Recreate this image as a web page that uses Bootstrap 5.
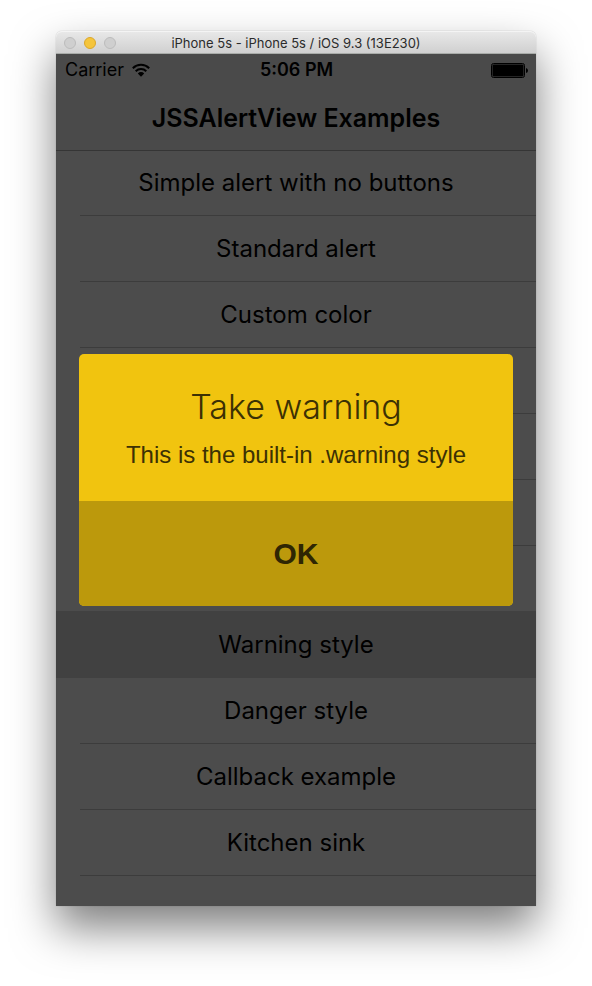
<!DOCTYPE html>
<html lang="en">
<head>
<meta charset="utf-8">
<meta name="viewport" content="width=device-width, initial-scale=1">
<title>JSSAlertView Examples</title>
<link href="https://cdn.jsdelivr.net/npm/bootstrap@5.3.0/dist/css/bootstrap.min.css" rel="stylesheet">
<style>
  body { background: #fff; color: #000; font-family: Inter, sans-serif; }
  .desktop { padding: 31px 56px 80px; }
  .sim-window { border-radius: 6px 6px 0 0; box-shadow: 0 22px 44px rgba(0,0,0,.5), 0 0 1px rgba(0,0,0,.4); }
  .titlebar { height: 23px; padding: 0 8px; border-radius: 6px 6px 0 0; border-bottom: 1px solid #a9aca9;
    background: linear-gradient(#e9e9e9, #d0d0d0); box-shadow: inset 0 1px #f4f4f4; }
  .titlebar h1 { font-size: 13px; line-height: 22px; padding-top: 2px; color: #2b2b2b; }
  .light { width: 12px; height: 12px; padding: 0; margin-top: 2px; border: 1px solid #bcbcbc; border-radius: 50%; background: #cfcfcf; }
  .light-min { background: #f5c53c; border-color: #dba72b; }
  .side { flex: 1 1 0; }
  .app-head { background: #f7f7f7; box-shadow: 0 1px #b2b2b2; z-index: 1; }
  .status { height: 32px; padding: 0 8px 0 9px; font-size: 18px; line-height: 32px; }
  .clock { font-weight: 600; }
  .app-title { height: 64px; line-height: 64px; font-size: 25px; font-weight: 600; }
  .examples { padding-bottom: 30px; background: #fff; }
  .example { height: 66px; }
  .example::before { content: ""; position: absolute; left: 24px; right: 0; bottom: 0; height: 1px; background: #c8c8c8; }
  .example button { font-size: 24px; line-height: 66px; color: #000; }
  .picked { background: #d9d9d9; box-shadow: 0 -1px #d9d9d9; }
  .picked::before { display: none; }
  .scrim { background: rgba(0,0,0,.7); padding: 0 23px; z-index: 2; }
  .alert-panel { border-radius: 5px; background: #f1c40f; color: #3c3104; }
  .alert-text { padding: 32px 16px 31px; }
  .alert-text h3 { font-size: 34px; line-height: 42px; font-weight: 300; }
  .alert-text p { font: 24px/30px "Liberation Sans", sans-serif; padding-top: 12px; }
  .alert-ok { height: 105px; background: #bc990c; color: #2f2603; font: 700 30px/106px "Liberation Sans", sans-serif; }
</style>
<script src="https://cdn.jsdelivr.net/npm/bootstrap@5.3.0/dist/js/bootstrap.bundle.min.js"></script>
</head>
<body>
<div class="desktop">
  <div class="sim-window">
    <header class="titlebar d-flex align-items-center">
      <div class="side d-flex gap-2">
        <button type="button" class="light" aria-label="Close"></button>
        <button type="button" class="light light-min" aria-label="Minimize"></button>
        <button type="button" class="light" aria-label="Zoom"></button>
      </div>
      <h1 class="m-0 fw-normal text-nowrap">iPhone 5s - iPhone 5s / iOS 9.3 (13E230)</h1>
      <div class="side"></div>
    </header>
    <main class="position-relative">
      <div class="app-head position-relative">
        <div class="status d-flex align-items-center">
          <div class="side d-flex align-items-center gap-2">
            <span>Carrier</span>
            <svg width="18" height="14" viewBox="0 0 18 14" aria-hidden="true">
              <g fill="none" stroke="#000" stroke-width="2">
                <path d="M.8 5.200a11.700 11.700 0 0 1 16.400 0"/>
                <path d="M3.700 8.300a7.500 7.500 0 0 1 10.600 0"/>
              </g>
              <path d="M5.800 10.400a4.600 4.600 0 0 1 6.400 0L9 13.700z"/>
            </svg>
          </div>
          <span class="clock">5:06 PM</span>
          <div class="side d-flex justify-content-end">
            <svg width="37" height="15" viewBox="0 0 37 15" aria-hidden="true">
              <rect x=".5" y=".5" width="33" height="14" rx="2" fill="none" stroke="#000"/>
              <rect x="1.500" y="1.500" width="31" height="12" rx="1"/>
              <path d="M35 5q2 .5 2 2.500T35 10z"/>
            </svg>
          </div>
        </div>
        <h2 class="app-title m-0 text-center">JSSAlertView Examples</h2>
      </div>
      <ul class="examples list-unstyled m-0">
        <li class="example position-relative"><button type="button" class="btn w-100 p-0 border-0">Simple alert with no buttons</button></li>
        <li class="example position-relative"><button type="button" class="btn w-100 p-0 border-0">Standard alert</button></li>
        <li class="example position-relative"><button type="button" class="btn w-100 p-0 border-0">Custom color</button></li>
        <li class="example position-relative"></li>
        <li class="example position-relative"></li>
        <li class="example position-relative"></li>
        <li class="example position-relative"></li>
        <li class="example picked position-relative"><button type="button" class="btn w-100 p-0 border-0">Warning style</button></li>
        <li class="example position-relative"><button type="button" class="btn w-100 p-0 border-0">Danger style</button></li>
        <li class="example position-relative"><button type="button" class="btn w-100 p-0 border-0">Callback example</button></li>
        <li class="example position-relative"><button type="button" class="btn w-100 p-0 border-0">Kitchen sink</button></li>
      </ul>
      <div class="scrim position-absolute top-0 start-0 w-100 h-100 d-flex align-items-center">
        <section class="alert-panel w-100 overflow-hidden text-center" role="alertdialog" aria-labelledby="alert-title" aria-describedby="alert-body">
          <div class="alert-text">
            <h3 id="alert-title" class="m-0">Take warning</h3>
            <p id="alert-body" class="m-0">This is the built-in .warning style</p>
          </div>
          <button type="button" class="alert-ok btn w-100 p-0 border-0 rounded-0">OK</button>
        </section>
      </div>
    </main>
  </div>
</div>
</body>
</html>
